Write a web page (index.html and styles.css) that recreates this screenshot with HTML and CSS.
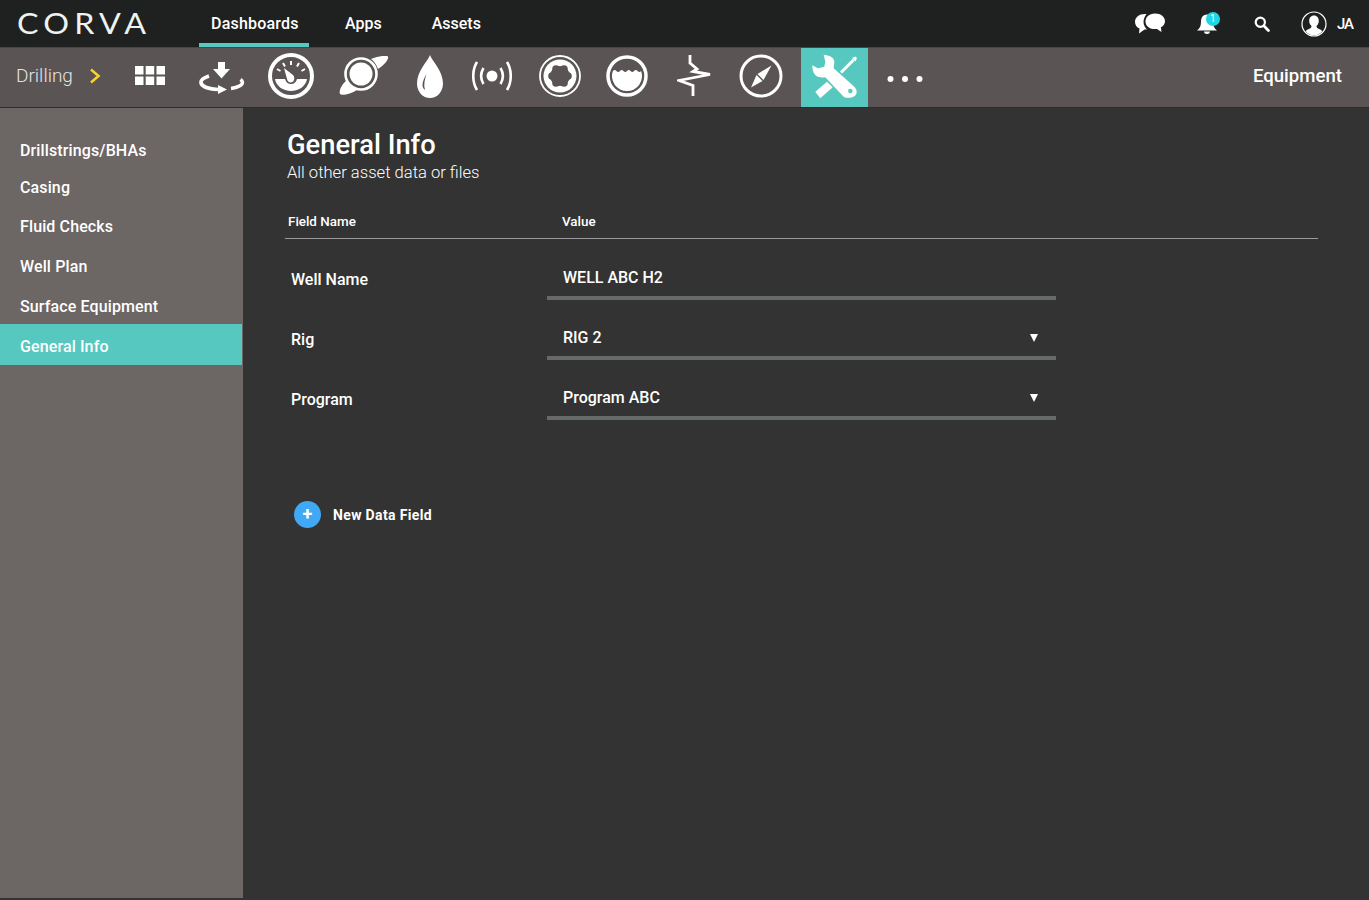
FILE: index.html
```html
<!DOCTYPE html>
<html lang="en">
  <head>
    <meta charset="UTF-8" />
    <title>General Info</title>
    <link rel="stylesheet" href="styles.css">
  </head>
  <body>
    <header class="topbar">
      <div class="logo">CORVA</div>
      <nav class="topnav">
        <a class="topnav-item active">Dashboards</a>
        <a class="topnav-item">Apps</a>
        <a class="topnav-item">Assets</a>
      </nav>
      <div class="topbar-right">
        <svg class="icon-chat" width="32" height="24" viewBox="0 0 32 24">
          <path fill="#fff" d="M11 2C5 2 1 5.500 1 10c0 3 1.800 5.300 4.500 6.600L5 21.500l5.500-4c.8.100 1.500.1 2.500 0C9 14 8 8 12.500 2.100 12 2 11.500 2 11 2z"/>
          <path fill="#fff" d="M21 1.500c-6 0-9.500 3.800-9.500 8s3.500 7.500 9 7.600c.9 0 1.800 0 2.500-.2l4.500 3-.6-4.700c2.600-1.300 4.100-3.400 4.100-6C31 5 27 1.500 21 1.500z"/>
        </svg>
        <div class="bell">
          <svg width="24" height="24" viewBox="0 0 24 24">
            <path fill="#fff" d="M12 2.500c-4 0-6 3-6 7 0 4-1 7-4 9h20c-3-2-4-5-4-9 0-4-2-7-6-7z"/>
            <path fill="#fff" d="M9 19.500h6c0 1.700-1.300 2.500-3 2.500s-3-.8-3-2.500z"/>
          </svg>
          <span class="badge">1</span>
        </div>
        <svg class="icon-search" width="16" height="16" viewBox="0 0 16 16">
          <circle cx="6.300" cy="6.300" r="4.600" fill="none" stroke="#fff" stroke-width="2.200"/>
          <path d="M9.800 9.800l4.600 4.600" stroke="#fff" stroke-width="2.800" stroke-linecap="round"/>
        </svg>
        <svg class="icon-user" width="26" height="26" viewBox="0 0 26 26">
          <circle cx="13" cy="13" r="12" fill="none" stroke="#fff" stroke-width="1.200"/>
          <path fill="#fff" d="M13 4.500c-3 0-4.800 2.300-4.800 5.300 0 2.300.9 4.200 2.300 5.300 0 1.400-.6 2-2 2.600-1.800.7-3 1.300-3.800 2.500C6.800 22.800 9.700 24.500 13 24.500s6.200-1.700 8.300-4.300c-.8-1.200-2-1.800-3.800-2.500-1.400-.6-2-1.200-2-2.600 1.400-1.100 2.300-3 2.300-5.300 0-3-1.800-5.300-4.800-5.300z"/>
        </svg>
        <span class="initials">JA</span>
      </div>
    </header>

    <div class="toolbar">
      <div class="crumb">
        <span>Drilling</span>
        <svg width="12" height="16" viewBox="0 0 12 16"><path d="M2 1.500L9.500 8 2 14.500" fill="none" stroke="#f5d327" stroke-width="2.600"/></svg>
      </div>
      <div class="tools">
        <div class="tool tool-grid">
          <svg width="30" height="19" viewBox="0 0 30 19" fill="#fff">
            <rect width="8.500" height="8.500"/><rect x="10.700" width="8.500" height="8.500"/><rect x="21.500" width="8.500" height="8.500"/>
            <rect y="10.500" width="8.500" height="8.500"/><rect x="10.700" y="10.500" width="8.500" height="8.500"/><rect x="21.500" y="10.500" width="8.500" height="8.500"/>
          </svg>
        </div>
        <div class="tool tool-low">
          <svg width="46" height="34" viewBox="0 0 46 34">
            <path fill="#fff" d="M19 1h7v7h5l-8.500 9.500L14 8h5z"/>
            <path d="M10 15C4 17 1.500 19.500 2 22c.8 3.500 8 6 17 6.500" fill="none" stroke="#fff" stroke-width="3.500"/>
            <path fill="#fff" d="M19 24l9 4.500-9 4.500z"/>
            <path d="M32 27.500c7-1 11.500-3.500 11.500-6 0-1-.7-2-2-3" fill="none" stroke="#fff" stroke-width="3.500"/>
          </svg>
        </div>
        <div class="tool">
          <svg width="46" height="46" viewBox="0 0 46 46">
            <circle cx="23" cy="23" r="21" fill="none" stroke="#fff" stroke-width="4"/>
            <path fill="#fff" d="M7 26h10c1 3.500 3 5 6 5s5-1.500 6-5h10c-1 7-8 12-16 12S8 33 7 26z"/>
            <path fill="#fff" d="M16 15l9 7c2 2 1.500 6-.5 7-2.500 1-5 0-5.500-3z"/>
            <path stroke="#fff" stroke-width="2" d="M23 8v4M31 10l-2 3.500M37 16l-3.500 2M9 16l3.500 2M15 10l2 3.500"/>
          </svg>
        </div>
        <div class="tool">
          <svg width="50" height="40" viewBox="0 0 50 40">
            <path fill="#fff" d="M32 3c7-3 16-4 17-2.500C50 3 46 9 39 13 37 8 35 5 32 3zM1 38c-1-2 0-8 7-14 2 5 5 8 10 10-6 4-15 6-17 4z"/>
            <circle cx="22" cy="18" r="15.500" fill="#5a5454" stroke="#fff" stroke-width="2.600"/>
            <circle cx="22" cy="18" r="11.500" fill="#fff"/>
          </svg>
        </div>
        <div class="tool">
          <svg width="26" height="43" viewBox="0 0 26 43">
            <path fill="#fff" d="M13 0c2 6 13 16 13 28.500C26 37 20 43 13 43S0 37 0 28.500C0 16 11 6 13 0z"/>
            <path fill="#5a5454" d="M9.500 19c-2.500 4-4 8-4 11 0 2 1 4 2.500 5-1.500-5-.5-10 1.500-16z"/>
          </svg>
        </div>
        <div class="tool">
          <svg width="40" height="32" viewBox="0 0 40 32" fill="none" stroke="#fff" stroke-width="2.600">
            <circle cx="20" cy="16" r="5.500" fill="#fff" stroke="none"/>
            <path d="M11.500 8C8.500 13 8.500 19 11.500 24M28.500 8c3 5 3 11 0 16M5 2C0 10 0 22 5 30M35 2c5 8 5 20 0 28"/>
          </svg>
        </div>
        <div class="tool">
          <svg width="42" height="42" viewBox="0 0 42 42">
            <circle cx="21" cy="21" r="20" fill="none" stroke="#fff" stroke-width="1.800"/>
            <circle cx="21" cy="21" r="16.500" fill="#fff"/>
            <g fill="#5a5454">
              <circle cx="21" cy="21" r="10"/>
              <circle cx="29" cy="21" r="3.800"/><circle cx="25" cy="27.900" r="3.800"/><circle cx="17" cy="27.900" r="3.800"/>
              <circle cx="13" cy="21" r="3.800"/><circle cx="17" cy="14.100" r="3.800"/><circle cx="25" cy="14.100" r="3.800"/>
            </g>
          </svg>
        </div>
        <div class="tool">
          <svg width="42" height="42" viewBox="0 0 42 42">
            <circle cx="21" cy="21" r="19" fill="none" stroke="#fff" stroke-width="3.500"/>
            <path fill="#fff" d="M6.900 16q1.760-2 3.525 0t3.525 0 3.525 0 3.525 0 3.525 0 3.525 0 3.525 0 3.525 0A15 15 0 1 1 6.900 16z"/>
          </svg>
        </div>
        <div class="tool">
          <svg width="34" height="42" viewBox="0 0 34 42">
            <path d="M13 0v8l7 6-4 2.500 17 3-31 6 14 5V41" fill="none" stroke="#fff" stroke-width="2.800"/>
          </svg>
        </div>
        <div class="tool">
          <svg width="44" height="44" viewBox="0 0 44 44">
            <circle cx="22" cy="22" r="20" fill="none" stroke="#fff" stroke-width="3"/>
            <path fill="#fff" d="M32.500 11.500L24.500 26l-6-6z"/>
            <path fill="#fff" d="M12 33.500L17.500 21l6 6z"/>
          </svg>
        </div>
        <div class="tool tool-active">
          <svg width="45" height="45" viewBox="0 0 45 45">
            <path fill="#fff" d="M11.700.7C17 1.500 22.300 3 22.300 7.700c0 2.500-.6 4.600-.6 6.600l20.600 18.400c2.700 2.500 3.200 6.300 1 8.700-2.300 2.300-8.600 3.500-11.600 1.300L13.300 23.300c-4 .5-7.500 0-10-2.300C1 18.500.3 15 .3 11.300L6 14.300l6.300-1.600 1-5z"/>
            <circle cx="38.300" cy="37" r="2.200" fill="#56c8c0"/>
            <path fill="#fff" d="M15 27.700l5.700 5.600L8.300 44.300 3.300 37.700z"/>
            <path d="M29 18.500L41.500 6" fill="none" stroke="#fff" stroke-width="3"/>
            <path fill="#fff" d="M40 4l3.500-1.500 1.500 1.500-1.500 3.500z"/>
          </svg>
        </div>
        <div class="tool tool-dots">
          <svg width="36" height="8" viewBox="0 0 36 8" fill="#fff">
            <circle cx="3.500" cy="4" r="3"/><circle cx="18" cy="4" r="3"/><circle cx="32.500" cy="4" r="3"/>
          </svg>
        </div>
      </div>
      <div class="toolbar-title">Equipment</div>
    </div>

    <div class="page">
      <ul class="sidebar">
        <li>Drillstrings/BHAs</li>
        <li>Casing</li>
        <li>Fluid Checks</li>
        <li>Well Plan</li>
        <li>Surface Equipment</li>
        <li class="active">General Info</li>
      </ul>
      <main class="content">
        <h1>General Info</h1>
        <p class="subtitle">All other asset data or files</p>
        <div class="table-head">
          <span class="col-name">Field Name</span>
          <span>Value</span>
        </div>
        <div class="field">
          <label>Well Name</label>
          <div class="value">WELL ABC H2</div>
        </div>
        <div class="field">
          <label>Rig</label>
          <div class="value">RIG 2 <span class="caret"></span></div>
        </div>
        <div class="field">
          <label>Program</label>
          <div class="value">Program ABC <span class="caret"></span></div>
        </div>
        <div class="add-field">
          <span class="add-btn">+</span>
          <span>New Data Field</span>
        </div>
      </main>
    </div>
  </body>
</html>
```

FILE: styles.css
```css
* {
  box-sizing: border-box;
}
html,
body {
  height: 100%;
}
body {
  margin: 0;
  display: flex;
  flex-direction: column;
  height: 900px;
  overflow: hidden;
  font-family: Roboto, sans-serif;
  color: #fff;
  background: #333;
}

/* top bar */
.topbar {
  display: flex;
  align-items: stretch;
  height: 47px;
  background: #1f2120;
}
.logo {
  width: 199px;
  padding-left: 17px;
  font-family: Lato, sans-serif;
  font-weight: 400;
  font-size: 28px;
  line-height: 46px;
  letter-spacing: 4.500px;
  color: #eef3f1;
  transform: scaleX(1.15);
  transform-origin: 17px 0;
}
.topnav {
  display: flex;
}
.topnav-item {
  margin-right: 50px;
  font-size: 16px;
  font-weight: 500;
  line-height: 47px;
}
.topnav-item.active {
  width: 110px;
  margin-right: 36px;
  padding-left: 12px;
  letter-spacing: .2px;
  border-bottom: 4px solid #56c8c0;
}
.topbar-right {
  display: flex;
  align-items: center;
  margin-left: auto;
  padding-right: 16px;
}
.icon-chat {
  margin-right: 29px;
}
.bell {
  position: relative;
  width: 24px;
  height: 24px;
  margin-right: 35px;
}
.bell svg {
  display: block;
}
.badge {
  position: absolute;
  top: 0;
  left: 11px;
  width: 14px;
  height: 14px;
  border-radius: 50%;
  background: #1fd6e6;
  font-size: 10px;
  line-height: 14px;
  text-align: center;
}
.icon-search {
  margin-right: 31px;
}
.icon-user {
  margin-right: 10px;
}
.initials {
  font-size: 15px;
  font-weight: 500;
  letter-spacing: -1px;
}

/* app toolbar */
.toolbar {
  display: flex;
  align-items: stretch;
  height: 61px;
  background: #5a5454;
  border-top: 1px solid #4a4544;
  border-bottom: 1px solid #2b2b2b;
}
.crumb {
  display: flex;
  align-items: center;
  width: 117px;
  padding: 0 0 4px 16px;
  font-size: 19px;
  font-weight: 300;
  color: #e6e4e4;
}
.crumb svg {
  margin-left: 16px;
}
.tools {
  display: grid;
  grid-template-columns: 66px 78px 60px 86px 46px 78px 58px 76px 58px 76px 2px 67px 74px;
}
.tool {
  display: flex;
  align-items: center;
  justify-content: center;
  padding-bottom: 3px;
}
.tool-grid {
  padding-bottom: 4px;
}
.tool-low {
  padding-bottom: 0;
}
.tool-dots {
  padding: 2px 0 0;
}
.tool-active {
  grid-column: 12;
  background: #56c8c0;
}
.toolbar-title {
  margin-left: auto;
  padding-right: 27px;
  font-size: 18.600px;
  font-weight: 500;
  line-height: 56px;
}

/* page */
.page {
  display: flex;
  flex: 1;
}
.sidebar {
  width: 243px;
  margin: 0;
  padding: 22px 0 0;
  list-style: none;
  background: #6c6665;
  border-bottom: 2px solid #333;
}
.sidebar li {
  height: 40px;
  padding-left: 20px;
  font-size: 16px;
  font-weight: 500;
  line-height: 42px;
  letter-spacing: .12px;
}
.sidebar li:nth-child(1) {
  margin-bottom: -3px;
}
.sidebar li:nth-child(2) {
  margin-bottom: -1px;
}
.sidebar li.active {
  height: 41px;
  margin-top: -2px;
  margin-right: 1px;
  line-height: 46px;
  background: #56c8c0;
}
.content {
  flex: 1;
  padding: 21px 51px 0 42px;
}
h1 {
  margin: 0 0 0 2px;
  font-size: 27.300px;
  font-weight: 500;
  line-height: 32px;
}
.subtitle {
  margin: 1px 0 0 2px;
  font-size: 16.600px;
  font-weight: 300;
  line-height: 22px;
}
.table-head {
  display: flex;
  height: 38px;
  margin-top: 17px;
  padding: 12px 0 0 3px;
  font-size: 13.400px;
  font-weight: 500;
  line-height: 18px;
  border-bottom: 1px solid #9a9a9a;
}
.col-name {
  width: 274px;
}
.field {
  display: flex;
  height: 60px;
  padding-left: 6px;
}
.field label {
  width: 256px;
  font-size: 16px;
  font-weight: 500;
  line-height: 82px;
}
.value {
  position: relative;
  width: 509px;
  height: 61px;
  padding: 24px 0 0 16px;
  font-size: 16px;
  font-weight: 500;
  line-height: 30px;
  border-bottom: 4px solid #666a68;
}
.caret {
  position: absolute;
  top: 35px;
  right: 18px;
  border-left: 4.500px solid transparent;
  border-right: 4.500px solid transparent;
  border-top: 8px solid #fff;
}
.add-field {
  display: flex;
  align-items: center;
  margin: 82px 0 0 9px;
  font-size: 14px;
  font-weight: 700;
  letter-spacing: .35px;
}
.add-btn {
  width: 27px;
  height: 27px;
  margin-right: 12px;
  border-radius: 50%;
  background: #3fa9f5;
  font-size: 18px;
  line-height: 26px;
  text-align: center;
}
```
